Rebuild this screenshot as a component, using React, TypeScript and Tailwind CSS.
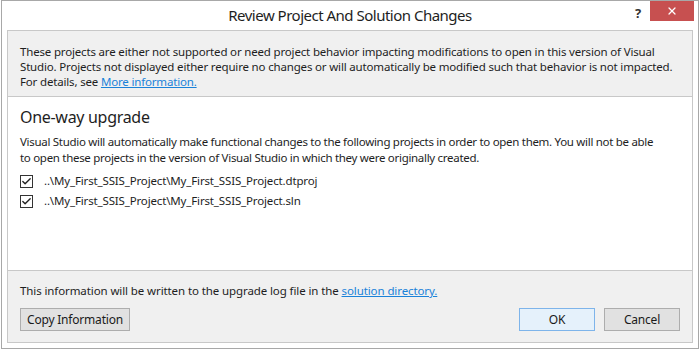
import { Check, X } from 'lucide-react'

const font = { fontFamily: '"Noto Sans", "Open Sans", sans-serif' }

function CheckRow({ path }: { path: string }) {
  return (
    <div className="flex h-[20px] items-center">
      <span className="flex h-[13px] w-[13px] items-center justify-center border border-[#333333] bg-white">
        <Check size={11} strokeWidth={3} className="text-[#222222]" />
      </span>
      <span className="ml-[11px] tracking-[-0.15px]">{path}</span>
    </div>
  )
}

function DialogButton({ label, width, primary }: { label: string; width: string; primary?: boolean }) {
  return (
    <button
      className={`h-[23px] ${width} border ${primary ? 'border-[#7eb4ea] bg-[#e5f1fb]' : 'border-[#adadad] bg-[#e1e1e1]'} text-[12px] text-[#1a1a1a]`}
    >
      {label}
    </button>
  )
}

export default function App() {
  return (
    <div
      className="h-[350px] w-[700px] overflow-hidden whitespace-nowrap bg-white text-[11.5px] tracking-[-0.2px] text-[#1e1e1e]"
      style={font}
    >
      <div className="ml-px flex h-[349px] w-[698px] flex-col border border-[#a8a8a8] bg-white px-[5px] pb-[5px]">
        {/* title bar */}
        <div className="relative flex h-[29px] shrink-0 items-center justify-center">
          <span className="text-[15px] tracking-[-0.5px] text-[#1e1e1e]">Review Project And Solution Changes</span>
          <span className="absolute right-[52px] top-[3px] text-[13px] font-bold text-[#333333]">?</span>
          <span className="absolute right-[-1px] top-0 flex h-[20px] w-[44px] items-center justify-center bg-[#c75050]">
            <X size={12} strokeWidth={2.5} className="text-white" />
          </span>
        </div>

        <div className="flex flex-1 flex-col border border-[#c8c8c8]">
          {/* info */}
          <div className="border-b border-[#c8c8c8] bg-[#f0f0f0] px-3 pb-[7px] pt-[13px] leading-[15px] tracking-[-0.17px]">
            These projects are either not supported or need project behavior impacting modifications to open in this version of Visual
            <br />
            Studio. Projects not displayed either require no changes or will automatically be modified such that behavior is not impacted.
            <br />
            For details, see{' '}
            <a className="text-[#1a82d9] underline" href="#">
              More information.
            </a>
          </div>

          {/* upgrade list */}
          <div className="flex-1 bg-white px-3 pt-[8px]">
            <div className="text-[16px] leading-[24px] tracking-[-0.3px] text-[#1e1e1e]">One-way upgrade</div>
            <p className="mt-[5px] leading-[16px] tracking-[-0.3px]">
              Visual Studio will automatically make functional changes to the following projects in order to open them. You will not be able
              <br />
              to open these projects in the version of Visual Studio in which they were originally created.
            </p>
            <div className="mt-[5px]">
              <CheckRow path="..\My_First_SSIS_Project\My_First_SSIS_Project.dtproj" />
              <CheckRow path="..\My_First_SSIS_Project\My_First_SSIS_Project.sln" />
            </div>
          </div>

          {/* footer */}
          <div className="border-t border-[#c8c8c8] bg-[#f0f0f0] px-3 pb-[11px] pt-[12px]">
            <div className="leading-[15px] tracking-[-0.1px]">
              This information will be written to the upgrade log file in the{' '}
              <a className="text-[#1a82d9] underline" href="#">
                solution directory.
              </a>
            </div>
            <div className="mt-[10px] flex items-center">
              <DialogButton label="Copy Information" width="w-[110px]" />
              <div className="flex-1" />
              <DialogButton label="OK" width="w-[76px]" primary />
              <div className="w-[9px]" />
              <DialogButton label="Cancel" width="w-[76px]" />
            </div>
          </div>
        </div>
      </div>
    </div>
  )
}
